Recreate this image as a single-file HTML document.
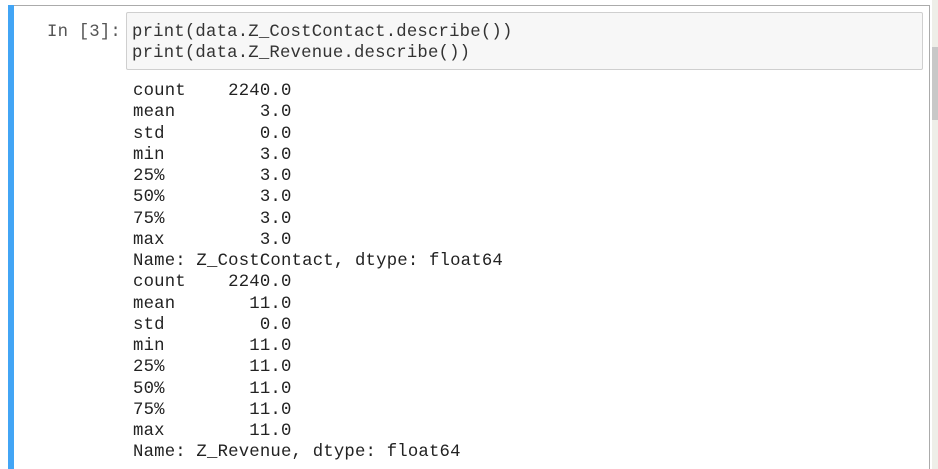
<!DOCTYPE html>
<html><head><style>
html,body{margin:0;padding:0;width:938px;height:469px;overflow:hidden;background:#fff;}
.f{font-family:"Liberation Mono",monospace;font-size:17.3px;line-height:21.25px;white-space:pre;color:#000;letter-spacing:0.2px;}
#top{position:absolute;left:8px;top:5px;width:922px;height:1px;background:#ababab;}
#bar{position:absolute;left:8px;top:5px;width:6px;height:464px;background:#42a5f5;}
#rb{position:absolute;left:929px;top:5px;width:1px;height:464px;background:#ababab;}
#sb{position:absolute;left:932px;top:0;width:6px;height:469px;background:#eeeee8;}
#th{position:absolute;left:932px;top:47px;width:6px;height:73px;background:#c8c8c8;}
#in{position:absolute;left:126px;top:12px;width:795px;height:56px;border:1px solid #cfcfcf;border-radius:2px;background:#f7f7f7;}
#prompt{position:absolute;left:47px;top:22px;color:#555;}
#code{position:absolute;left:132px;top:22px;color:#333;}
#out{position:absolute;left:133px;top:81px;color:#222;}
</style></head><body>
<div id="top"></div><div id="bar"></div><div id="rb"></div><div id="sb"></div><div id="th"></div>
<div id="in"></div>
<div id="prompt" class="f">In [3]:</div>
<div id="code" class="f">print(data.Z_CostContact.describe())
print(data.Z_Revenue.describe())</div>
<div id="out" class="f">count    2240.0
mean        3.0
std         0.0
min         3.0
25%         3.0
50%         3.0
75%         3.0
max         3.0
Name: Z_CostContact, dtype: float64
count    2240.0
mean       11.0
std         0.0
min        11.0
25%        11.0
50%        11.0
75%        11.0
max        11.0
Name: Z_Revenue, dtype: float64</div>
</body></html>
